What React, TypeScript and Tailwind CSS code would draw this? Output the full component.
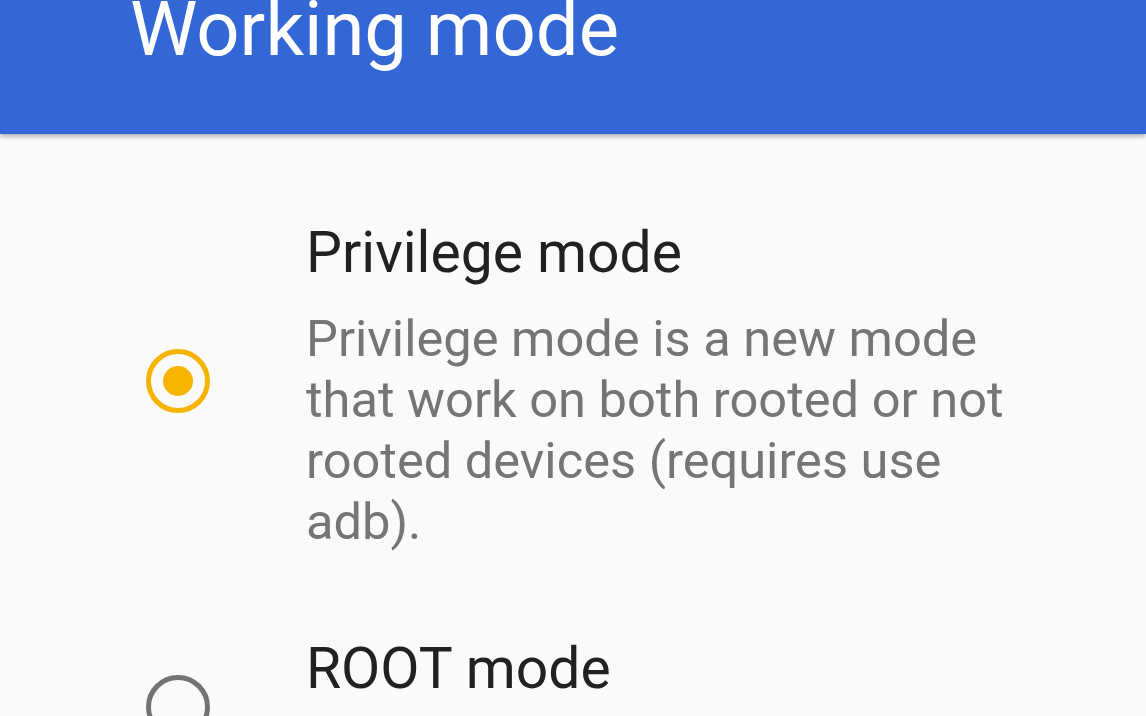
import React from 'react';

const font = { fontFamily: 'Roboto, "Noto Sans", sans-serif' };

const Radio: React.FC<{ checked?: boolean }> = ({ checked }) => (
  <div
    className={`w-[64px] h-[64px] rounded-full border-[5px] flex items-center justify-center shrink-0 ${
      checked ? 'border-[#f4b400]' : 'border-[#737373]'
    }`}
  >
    {checked && <div className="w-[30px] h-[30px] rounded-full bg-[#f4b400]" />}
  </div>
);

export default function App() {
  return (
    <div className="w-[1146px] h-[716px] overflow-hidden bg-[#fafafa]" style={font}>
      <div className="relative z-10 h-[134px] bg-[#3367d6] pl-[130px] shadow-[0_2px_5px_rgba(0,0,0,0.35)]">
        <h1 className="text-white text-[76px] leading-[58px] font-normal whitespace-nowrap">Working mode</h1>
      </div>

      <div className="pl-[146px] pt-[87px]">
        <div className="flex items-start">
          <div className="mt-[128px]">
            <Radio checked />
          </div>
          <div className="ml-[96px]">
            <div className="text-[57px] leading-[64px] text-[#212121] whitespace-nowrap">Privilege mode</div>
            <div className="mt-[23px] text-[50.6px] leading-[61px] text-[#757575] whitespace-nowrap">
              Privilege mode is a new mode
              <br />
              that work on both rooted or not
              <br />
              rooted devices (requires use
              <br />
              adb).
            </div>
          </div>
        </div>

        <div className="flex items-start mt-[85px]">
          <div className="mt-[38px]">
            <Radio />
          </div>
          <div className="ml-[96px]">
            <div className="text-[57px] leading-[64px] text-[#212121] whitespace-nowrap">ROOT mode</div>
          </div>
        </div>
      </div>
    </div>
  );
}
